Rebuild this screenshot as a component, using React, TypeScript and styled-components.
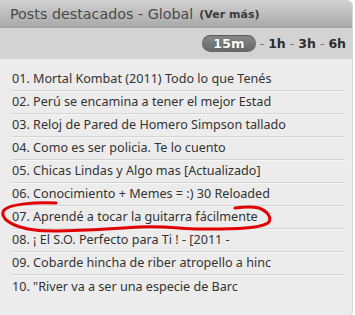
import React from "react";
import styled, { createGlobalStyle } from "styled-components";

const Global = createGlobalStyle`
  html, body { margin: 0; padding: 0; background: #ffffff; }
  body { font-family: "DejaVu Sans", Verdana, sans-serif; }
`;

const Panel = styled.div`
  position: relative;
  width: 352px;
  border-right: 1px solid #d6d6d6;
  border-bottom: 1px solid #dcdcdc;
  border-radius: 0 6px 6px 0;
  overflow: hidden;
  background: #ececec;
`;

const Header = styled.div`
  height: 28px;
  display: flex;
  align-items: center;
  padding-left: 10px;
  background: linear-gradient(#d2d2d2, #b9b9b9 60%, #a9a9a9);
  border-bottom: 1px solid #a0a0a0;
  box-sizing: border-box;
  color: #4a4a4a;
`;

const Title = styled.span`
  font-size: 14.3px;
`;

const More = styled.span`
  font-size: 11px;
  font-weight: bold;
  margin-left: 6px;
  margin-top: 2px;
  color: #3a3a3a;
`;

const SubBar = styled.div`
  height: 31px;
  display: flex;
  align-items: center;
  justify-content: flex-end;
  padding-right: 6px;
  background: #d3d3d3;
  font-size: 12.5px;
  font-weight: bold;
  color: #2e2e2e;
`;

const Pill = styled.span`
  display: inline-flex;
  align-items: center;
  justify-content: center;
  height: 17px;
  padding: 0 11px;
  border-radius: 9px;
  background: linear-gradient(#8a8a8a, #666666);
  box-shadow: inset 0 1px 1px rgba(0,0,0,0.35);
  color: #ffffff;
  text-shadow: 0 0 1px #333;
  font-size: 13px;
`;

const Sep = styled.span`
  color: #777;
  font-weight: normal;
  margin: 0 4px;
`;

const List = styled.ol`
  list-style: none;
  margin: 0;
  padding: 9px 7px 18px 12px;
`;

const Item = styled.li`
  height: 23px;
  display: flex;
  align-items: center;
  padding-bottom: 1px;
  border-bottom: 1px solid #d4d4d4;
  box-shadow: 0 1px 0 #f6f6f6;
  font-family: "Noto Sans", "DejaVu Sans", sans-serif;
  font-size: 12.6px;
  color: #333;
  white-space: nowrap;
  overflow: hidden;
  box-sizing: border-box;
  &:last-child { border-bottom: none; box-shadow: none; }
`;

const Mark = styled.svg`
  position: absolute;
  left: 0;
  top: 196px;
  pointer-events: none;
`;

const items = [
  "01. Mortal Kombat (2011) Todo lo que Tenés",
  "02. Perú se encamina a tener el mejor Estad",
  "03. Reloj de Pared de Homero Simpson tallado",
  "04. Como es ser policia. Te lo cuento",
  "05. Chicas Lindas y Algo mas [Actualizado]",
  "06. Conocimiento + Memes = :) 30 Reloaded",
  "07. Aprendé a tocar la guitarra fácilmente",
  "08. ¡ El S.O. Perfecto para Ti ! - [2011 -",
  "09. Cobarde hincha de riber atropello a hinc",
  "10. \"River va a ser una especie de Barc",
];

export default function App() {
  return (
    <>
      <Global />
      <Panel>
        <Header>
          <Title>Posts destacados - Global</Title>
          <More>(Ver más)</More>
        </Header>
        <SubBar>
          <Pill>15m</Pill>
          <Sep>-</Sep>1h<Sep>-</Sep>3h<Sep>-</Sep>6h
        </SubBar>
        <List>
          {items.map((t) => (
            <Item key={t}>{t}</Item>
          ))}
        </List>
        <Mark width="280" height="44" viewBox="0 0 280 44">
          <path
            d="M56 7 C 35 6, 10 8, 4 14 C -1 21, 10 31, 35 34 C 60 37, 100 33, 140 31 C 170 30, 180 33, 200 33 C 232 33, 258 33, 268 27 C 273 22, 267 15, 259 12 C 251 10, 242 11, 235 12"
            fill="none"
            stroke="#e00000"
            strokeWidth="3"
            strokeLinecap="round"
            strokeLinejoin="round"
          />
        </Mark>
      </Panel>
    </>
  );
}
